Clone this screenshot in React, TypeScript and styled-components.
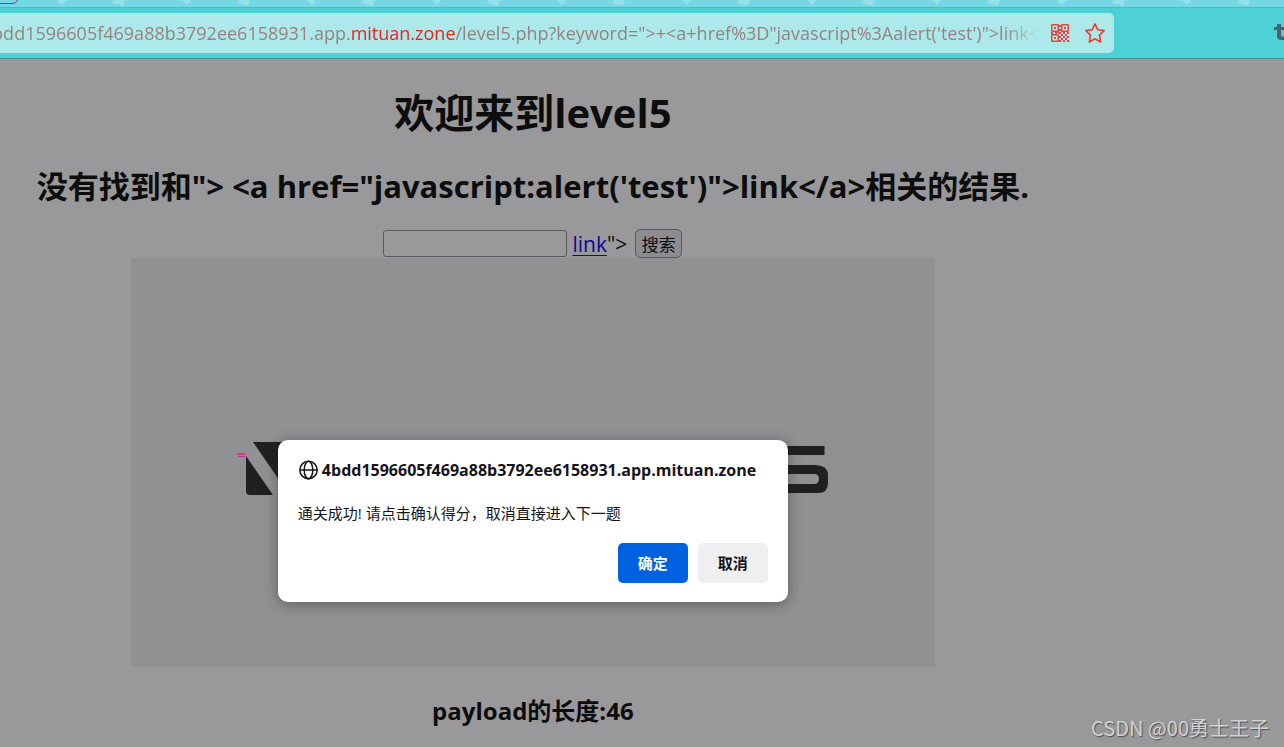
import React from "react";
import styled, { createGlobalStyle } from "styled-components";

const sans = `"Open Sans", "Noto Sans CJK SC", sans-serif`;

const GlobalStyle = createGlobalStyle`
  * { box-sizing: border-box; }
  body { margin: 0; background: #99999b; font-family: ${sans}; }
`;

const Window = styled.div`
  position: relative;
  min-height: 100vh;
  display: flex;
  flex-direction: column;
  overflow: hidden;
`;

const TabStrip = styled.div`
  height: 8px;
  background: #74d9e5;
  border-bottom: 1px solid #8aa0a6;
  svg { display: block; }
`;

const Toolbar = styled.header`
  height: 51px;
  display: flex;
  align-items: center;
  justify-content: space-between;
  padding-bottom: 1px;
  background: #4ed1d6;
  border-bottom: 1px solid #4b909a;
`;

const AddressBar = styled.div`
  height: 40px;
  width: 1114px;
  flex-shrink: 1;
  min-width: 0;
  display: flex;
  align-items: center;
  padding-right: 2px;
  background: #ade9ea;
  border-radius: 0 5px 5px 0;
`;

const Address = styled.div`
  flex: 1;
  min-width: 0;
  display: flex;
  justify-content: flex-end;
  margin-right: 3px;
  overflow: hidden;
  white-space: pre;
  font-size: 18px;
  line-height: 28px;
  color: #98827f;
  mask-image: linear-gradient(to left, transparent 0, #000 36px);
`;

const Host = styled.span`
  color: #ed2218;
`;

const IconButton = styled.button`
  width: 35px;
  height: 32px;
  display: grid;
  place-items: center;
  padding: 0;
  border: 0;
  background: none;
`;

const Page = styled.main`
  position: relative;
  flex: 1;
  width: 83%;
  display: flex;
  flex-direction: column;
  align-items: center;
  padding-top: 26px;
  color: #0d0d0e;
`;

const Title = styled.h1`
  margin: 0 0 18px;
  font-size: 40px;
  line-height: 56px;
`;

const Result = styled.h2`
  margin: 0 0 16px;
  font-size: 31px;
  line-height: 54px;
  white-space: nowrap;
`;

const SearchForm = styled.form`
  height: 29px;
  display: flex;
  align-items: center;
  font-size: 21px;
  line-height: 28px;
  white-space: pre;
`;

const Keyword = styled.input`
  width: 184px;
  height: 27px;
  margin-right: 5px;
  padding: 2px 4px;
  background: #99999b;
  border: 1px solid #5a5963;
  border-radius: 3px;
  font: 17px ${sans};
`;

const Link = styled.a`
  color: #0c0a96;
  text-decoration-thickness: 1px;
  text-underline-offset: 3px;
`;

const SearchButton = styled.button`
  width: 47px;
  height: 29px;
  margin-left: 8px;
  padding: 0;
  background: #8c8c91;
  border: 1px solid #5a5963;
  border-radius: 5px;
  color: #0d0d0e;
  font: 17px ${sans};
`;

const Picture = styled.figure`
  width: 804px;
  max-width: 100%;
  margin: 0 0 26px;
  background: #919193;
  svg { display: block; width: 100%; }
`;

const Length = styled.h3`
  margin: 0;
  font-size: 24px;
  line-height: 36px;
`;

const Dialog = styled.section`
  position: absolute;
  top: 381px;
  left: 50%;
  width: 510px;
  height: 162px;
  transform: translateX(-50%);
  padding: 19px 20px;
  background: #fff;
  border-radius: 10px;
  box-shadow: 0 2px 14px rgba(30, 30, 34, 0.45);
  color: #15141a;
  font-size: 15px;
`;

const DialogTitle = styled.h4`
  display: flex;
  align-items: center;
  gap: 4px;
  margin: 0 0 22px;
  font-size: 16px;
  line-height: 22px;
  white-space: nowrap;
`;

const Message = styled.p`
  margin: 0 0 20px;
  line-height: 20px;
`;

const Actions = styled.div`
  display: flex;
  justify-content: flex-end;
  gap: 10px;
`;

const ActionButton = styled.button<{ $primary?: boolean }>`
  width: 70px;
  height: 40px;
  padding: 0 0 2px;
  border: 0;
  border-radius: 5px;
  background: ${(p) => (p.$primary ? "#0061e0" : "#efeff1")};
  color: ${(p) => (p.$primary ? "#fbfbfe" : "#15141a")};
  font: bold 15px ${sans};
`;

const Watermark = styled.div`
  position: absolute;
  right: 15px;
  bottom: 5px;
  color: #d2d2d3;
  font: 20px/28px "Noto Sans CJK SC", sans-serif;
  text-shadow: 1px 1px 1px #505052;
`;

const QrIcon = () => (
  <svg width="18" height="18" viewBox="0 0 18 18" fill="none" stroke="#e2483f" strokeWidth="1.5">
    <rect x="0.75" y="0.75" width="6.5" height="6.5" rx="0.5" />
    <rect x="10.75" y="0.75" width="6.5" height="6.5" rx="0.5" />
    <rect x="0.75" y="10.75" width="6.5" height="6.5" rx="0.5" />
    <path
      fill="#e2483f"
      stroke="none"
      d="M3 3h2v2H3zM13 3h2v2h-2zM3 13h2v2H3zM8 1h2v2H8zM8 5h2v2H8zM0 8h2v2H0zM4 8h2v2H4zM8 8h2v2H8zM12 8h2v2h-2zM16 8h2v2h-2zM6 7h2v2H6zM10 10h2v2h-2zM14 10h2v2h-2zM8 12h2v2H8zM12 12h2v2h-2zM16 12h2v2h-2zM10 14h2v2h-2zM14 14h2v2h-2zM8 16h2v2H8zM12 16h2v2h-2zM16 16h2v2h-2z"
    />
  </svg>
);

const StarIcon = () => (
  <svg width="20" height="20" viewBox="0 0 20 20" fill="none" stroke="#ea3b32" strokeWidth="1.6" strokeLinejoin="round">
    <path d="M10 0.900l2.800 5.900 6.400.8-4.700 4.500 1.200 6.900L10 15.800l-5.700 3.200 1.200-6.900L.8 7.600l6.400-.8z" />
  </svg>
);

const GlobeIcon = () => (
  <svg width="20" height="20" viewBox="0 0 20 20" fill="none" stroke="#15141a" strokeWidth="1.5">
    <circle cx="10.500" cy="10" r="8.700" />
    <ellipse cx="10.500" cy="10" rx="4.300" ry="8.700" />
    <path d="M2 10h17" />
  </svg>
);

const ExtensionIcon = () => (
  <svg width="10" height="18" viewBox="0 0 10 18" fill="#585c68">
    <path d="M3 0h4v3h3v3H7v5c0 1 .5 1.500 1.500 1.500H10V16H7c-2.700 0-4-1.400-4-4V6H0V3h3z" />
  </svg>
);

export default function App() {
  return (
    <Window>
      <GlobalStyle />
      <TabStrip>
        <svg width="100%" height="7">
          <defs>
            <pattern id="confetti" width="125" height="7" patternUnits="userSpaceOnUse">
              <path d="M57 0h9l-4 5zM114 0h11l-2 6-11-3z" fill="#92e2eb" />
            </pattern>
          </defs>
          <rect width="100%" height="7" fill="url(#confetti)" />
          <path d="M0 3.500h13q3 0 4.500-3.500" fill="none" stroke="#a02ca0" />
        </svg>
      </TabStrip>
      <Toolbar>
        <AddressBar>
          <Address role="textbox" aria-label="Address">
            <span>
              bdd1596605f469a88b3792ee6158931.app.<Host>mituan.zone</Host>
              {`/level5.php?keyword=">+<a+href%3D"javascript%3Aalert('test')">link<`}
            </span>
          </Address>
          <IconButton type="button" aria-label="QR code"><QrIcon /></IconButton>
          <IconButton type="button" aria-label="Bookmark"><StarIcon /></IconButton>
        </AddressBar>
        <ExtensionIcon />
      </Toolbar>
      <Page>
        <Title>欢迎来到level5</Title>
        <Result>{`没有找到和"> <a href="javascript:alert('test')">link</a>相关的结果.`}</Result>
        <SearchForm onSubmit={(e) => e.preventDefault()}>
          <Keyword name="keyword" aria-label="搜索" />
          <Link href="#test">link</Link>
          {`">`}
          <SearchButton type="submit">搜索</SearchButton>
        </SearchForm>
        <Picture>
          <svg viewBox="0 0 804 409" fill="#202023">
            <path d="M122 184h40v54l-11-12z" />
            <path d="M115 198l27 39h-23q-4 0-4-4z" />
            <path d="M640 188h53.500v9H640zM640 207h43q14 0 14 10v8q0 10-10 10h-47v-9h43q5 0 5-5t-5-5h-43z" />
            <path d="M106 196h8" stroke="#e8206c" strokeWidth="1.500" />
            <path d="M107 198.500h7" stroke="#b428b0" />
          </svg>
        </Picture>
        <Length>payload的长度:46</Length>
        <Dialog role="dialog" aria-labelledby="dialog-title">
          <DialogTitle id="dialog-title">
            <GlobeIcon />
            4bdd1596605f469a88b3792ee6158931.app.mituan.zone
          </DialogTitle>
          <Message>通关成功! 请点击确认得分，取消直接进入下一题</Message>
          <Actions>
            <ActionButton type="button" $primary>确定</ActionButton>
            <ActionButton type="button">取消</ActionButton>
          </Actions>
        </Dialog>
      </Page>
      <Watermark>CSDN @00勇士王子</Watermark>
    </Window>
  );
}
